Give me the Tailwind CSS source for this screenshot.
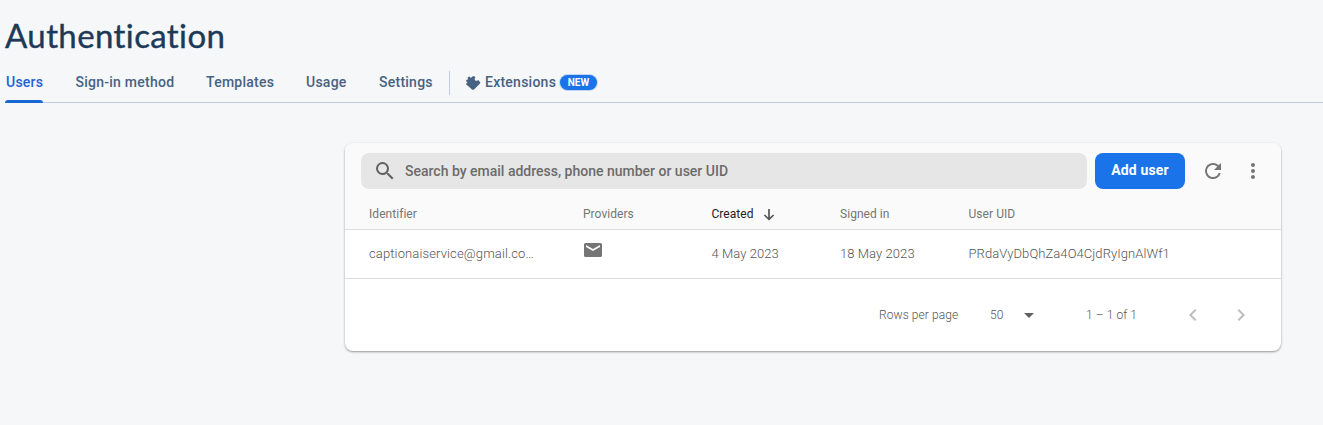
<!DOCTYPE html>
<html lang="en">
<head>
<meta charset="utf-8">
<title>Authentication</title>
<script src="https://cdn.jsdelivr.net/npm/@tailwindcss/browser@4"></script>
</head>
<body class="h-[425px] overflow-hidden bg-[#f6f7f9] font-['Roboto',sans-serif] text-xs text-[#757575]">
<header class="pl-[5px]">
  <h1 class="h-[67px] pt-[15px] text-[33px] leading-10 font-normal tracking-[0.4px] text-[#1c3a57] font-['Lato',sans-serif] [-webkit-text-stroke:0.4px_#1c3a57]"><span>Authentication</span></h1>
  <nav class="flex h-9 items-start border-b border-[#bfcbe0] text-sm font-medium tracking-[0.25px] whitespace-nowrap text-[#476282]">
    <a class="flex h-9 w-[38px] flex-col justify-between pl-px text-[#2360d6]"><span class="mt-[5px] leading-5">Users</span><span class="-ml-px h-[3px] w-[38px] rounded-t-[3px] bg-[#1967d2]"></span></a>
    <a class="ml-[32.5px] mt-[5px] w-[98.5px] leading-5">Sign-in method</a>
    <a class="ml-8 mt-[5px] w-[68px] leading-5">Templates</a>
    <a class="ml-8 mt-[5px] w-[41px] leading-5">Usage</a>
    <a class="ml-8 mt-[5px] w-[55px] leading-5">Settings</a>
    <span class="ml-[15px] mt-1 h-6 w-px bg-[#c2cddf]"></span>
    <a class="ml-[15px] mt-[5px] flex items-center leading-5">
      <svg class="mt-px h-4 w-4" viewBox="0 0 16 16" fill="currentColor"><path d="M.8 9L2.6 7.2C.8 7 .6 4.8 2.2 4.6L3.4 4.8C2.4 3.4 2.4 2.4 3.4 1.9C4.6 1.4 5.4 2.2 5.8 3L7.6 1.4Q8.6.7 9.6 1.5L10.4 2.3Q9 4.1 10 5.2Q11.4 6.6 13.2 5L15 6.9Q15.7 7.8 15 8.6L9 14.4Q8 15.2 7 14.4L.8 9Z"/></svg>
      <span class="ml-1 w-[72px]">Extensions</span>
      <span class="ml-[3px] mt-px flex h-[15px] w-[37px] items-center justify-center rounded-full bg-[#1a73e8] text-[10px] tracking-[0.1px] font-bold text-white ring-1 ring-[#1a73e8]/25">NEW</span>
    </a>
  </nav>
</header>
<main class="ml-[345px] mt-[40px] h-[208px] w-[936px] rounded-lg bg-white shadow-[0_1px_2px_rgba(0,0,0,0.3),0_1px_3px_rgba(0,0,0,0.12)]">
  <div class="h-[87px] rounded-t-lg border-b border-[#dcdcdc] bg-[#fafafa]">
    <div class="flex items-center pt-[10px] pl-4">
      <div class="flex h-9 w-[726px] items-center rounded-lg bg-[#e6e6e6] pl-3 text-sm font-medium text-[#6b6b6b]">
        <svg class="h-6 w-6" viewBox="0 0 24 24" fill="#616161"><path d="M15.5 14h-.79l-.28-.27A6.471 6.471 0 0016 9.5 6.5 6.5 0 109.5 16c1.61 0 3.09-.59 4.23-1.57l.27.28v.79l5 4.99L20.49 19l-4.99-5zm-6 0C7.01 14 5 11.99 5 9.5S7.01 5 9.5 5 14 7.01 14 9.5 11.99 14 9.5 14z"/></svg>
        <span class="ml-2">Search by email address, phone number or user UID</span>
      </div>
      <button class="ml-2 h-9 w-[90px] rounded-lg bg-[#1a73e8] pb-[2px] text-sm font-bold tracking-[0.15px] text-white">Add user</button>
      <svg class="ml-4 h-6 w-6" viewBox="0 0 24 24" fill="#757575"><path d="M17.65 6.35A7.958 7.958 0 0012 4a8 8 0 107.73 10h-2.08A5.99 5.99 0 0112 18c-3.31 0-6-2.69-6-6s2.69-6 6-6c1.66 0 3.14.69 4.22 1.78L13 11h7V4l-2.35 2.35z"/></svg>
      <svg class="ml-4 h-6 w-6" viewBox="0 0 24 24" fill="#757575"><path d="M12 8c1.1 0 2-.9 2-2s-.9-2-2-2-2 .9-2 2 .9 2 2 2zm0 2c-1.1 0-2 .9-2 2s.9 2 2 2 2-.9 2-2-.9-2-2-2zm0 6c-1.1 0-2 .9-2 2s.9 2 2 2 2-.9 2-2-.9-2-2-2z"/></svg>
    </div>
    <div class="mt-4 grid grid-cols-[214px_128.5px_128.5px_128.5px_1fr] pl-6 leading-[18px] tracking-[0.05px]">
      <span>Identifier</span><span>Providers</span>
      <span class="flex items-center text-[#212121]">Created<svg class="ml-2 mt-[2px] h-[14px] w-[14px]" viewBox="0 0 14 14" fill="none" stroke="#555" stroke-width="1.7"><path d="M7 1v10M2.4 7L7 11.4 11.6 7"/></svg></span>
      <span>Signed in</span><span>User UID</span>
    </div>
  </div>
  <div class="grid h-[49px] grid-cols-[214px_128.5px_128.5px_128.5px_1fr] items-center border-b border-[#dcdcdc] pl-6 text-[13px] font-light tracking-[0.07px] text-[#555]">
    <span class="tracking-[0.13px]">captionaiservice@gmail.co…</span>
    <svg class="-ml-[2px] mb-[8px] h-6 w-6" viewBox="0 0 24 24" fill="#757575"><path d="M19.5 5h-15A1.5 1.5 0 003 6.500v11A1.500 1.500 0 004.500 19h15a1.500 1.500 0 001.500-1.500v-11A1.500 1.500 0 0019.500 5zM19 9l-7 4-7-4V7l7 4 7-4v2z"/></svg>
    <span>4 May 2023</span><span>18 May 2023</span><span>PRdaVyDbQhZa4O4CjdRyIgnAlWf1</span>
  </div>
  <div class="flex h-[72px] items-center pl-[534px] font-light tracking-[0.08px] text-[#555]">
    <span class="w-[80px] whitespace-nowrap">Rows per page</span>
    <span class="ml-[31px] w-[14px]">50</span>
    <svg class="ml-[13px] h-6 w-6" viewBox="0 0 24 24" fill="#616161"><path d="M7 10l5 5 5-5z"/></svg>
    <span class="ml-[45px] w-[52px] whitespace-nowrap">1 – 1 of 1</span>
    <svg class="ml-[43px] h-6 w-6" viewBox="0 0 24 24" fill="#bdbdbd"><path d="M15.41 7.41L14 6l-6 6 6 6 1.41-1.41L10.83 12z"/></svg>
    <svg class="ml-6 h-6 w-6" viewBox="0 0 24 24" fill="#bdbdbd"><path d="M10 6L8.59 7.41 13.17 12l-4.58 4.59L10 18l6-6z"/></svg>
  </div>
</main>
</body>
</html>
